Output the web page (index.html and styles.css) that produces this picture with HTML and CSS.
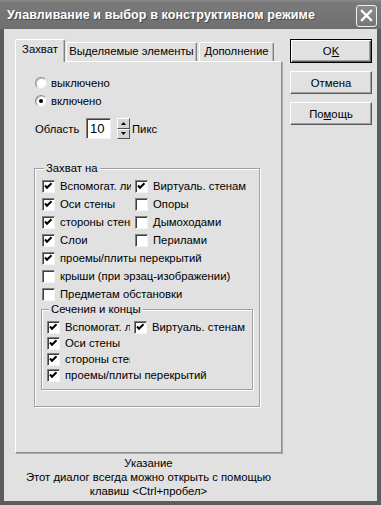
FILE: index.html
```html
<!DOCTYPE html>
<html lang="ru">
<head>
<meta charset="utf-8">
<link rel="stylesheet" href="styles.css">
</head>
<body>
<div class="window">
  <div class="titlebar">
    <span class="title">Улавливание и выбор в конструктивном режиме</span>
    <span class="close"><svg width="13" height="13" viewBox="0 0 13 13"><path d="M2 2 L11 11 M11 2 L2 11" stroke="#fff" stroke-width="2.4" stroke-linecap="square"/></svg></span>
  </div>
  <div class="frame">
    <div class="main">
      <div class="tabs">
        <div class="tab active">Захват</div>
        <div class="tab">Выделяемые элементы</div>
        <div class="tab">Дополнение</div>
      </div>
      <div class="panel">
        <div class="radio-row"><span class="radio"></span><span>выключено</span></div>
        <div class="radio-row"><span class="radio checked"></span><span>включено</span></div>
        <div class="area-row">
          <span class="area-label">Область</span>
          <span class="edit">10</span>
          <span class="spin"><span class="spin-btn"><svg width="5" height="3" viewBox="0 0 5 3"><path d="M2.5 0 L5 3 L0 3 Z" fill="#000"/></svg></span><span class="spin-btn"><svg width="5" height="3" viewBox="0 0 5 3"><path d="M0 0 L5 0 L2.5 3 Z" fill="#000"/></svg></span></span>
          <span class="unit">Пикс</span>
        </div>
        <fieldset class="group outer">
          <legend>Захват на</legend>
          <div class="grid">
            <label class="cb-cell first"><span class="cb checked"></span><span class="txt">Вспомогат. линиям</span></label>
            <label class="cb-cell"><span class="cb checked"></span><span class="txt">Виртуаль. стенам</span></label>
            <label class="cb-cell first"><span class="cb checked"></span><span class="txt">Оси стены</span></label>
            <label class="cb-cell"><span class="cb"></span><span class="txt">Опоры</span></label>
            <label class="cb-cell first"><span class="cb checked"></span><span class="txt">стороны стены</span></label>
            <label class="cb-cell"><span class="cb"></span><span class="txt">Дымоходами</span></label>
            <label class="cb-cell first"><span class="cb checked"></span><span class="txt">Слои</span></label>
            <label class="cb-cell"><span class="cb"></span><span class="txt">Перилами</span></label>
            <label class="cb-cell wide"><span class="cb checked"></span><span class="txt">проемы/плиты перекрытий</span></label>
            <label class="cb-cell wide"><span class="cb"></span><span class="txt">крыши (при эрзац-изображении)</span></label>
            <label class="cb-cell wide"><span class="cb"></span><span class="txt">Предметам обстановки</span></label>
          </div>
          <fieldset class="group inner">
            <legend>Сечения и концы</legend>
            <div class="grid inner-grid">
              <label class="cb-cell first"><span class="cb checked"></span><span class="txt">Вспомогат. линиям</span></label>
              <label class="cb-cell"><span class="cb checked"></span><span class="txt">Виртуаль. стенам</span></label>
              <label class="cb-cell wide"><span class="cb checked"></span><span class="txt">Оси стены</span></label>
              <label class="cb-cell first"><span class="cb checked"></span><span class="txt">стороны стены</span></label>
              <span></span>
              <label class="cb-cell wide"><span class="cb checked"></span><span class="txt">проемы/плиты перекрытий</span></label>
            </div>
          </fieldset>
        </fieldset>
      </div>
      <div class="hint">
        <div>Указание</div>
        <div>Этот диалог всегда можно открыть с помощью</div>
        <div>клавиш &lt;Ctrl+пробел&gt;</div>
      </div>
    </div>
    <div class="buttons">
      <div class="btn default">O<u>K</u></div>
      <div class="btn">Отмена</div>
      <div class="btn">По<u>м</u>ощь</div>
    </div>
  </div>
</div>
</body>
</html>
```

FILE: styles.css
```css
* { box-sizing: border-box; }
html, body { margin: 0; padding: 0; background: #5c5c5c; }
body {
  font-family: "Liberation Sans", Arial, sans-serif;
  font-size: 11.3px;
  color: #000;
}
.window {
  width: 381px;
  height: 505px;
  display: flex;
  flex-direction: column;
  background: #e1e1e1;
}
.titlebar {
  height: 29px;
  flex: none;
  display: flex;
  align-items: center;
  justify-content: space-between;
  padding: 0 4px 0 7px;
  background: linear-gradient(#8a8a8a 0, #797979 3px, #747474 60%, #6e6e6e 100%);
}
.title {
  color: #fff;
  font-weight: bold;
  font-size: 12.5px;
  letter-spacing: 0.1px;
  text-shadow: 1px 1px 0 #4a4a4a;
}
.close {
  width: 21px;
  height: 22px;
  margin-top: 2px;
  border: 1px solid #f0f0f0;
  border-radius: 3px;
  background: linear-gradient(#8a8a8a, #777);
  display: flex;
  align-items: center;
  justify-content: center;
}
.frame {
  flex: 1;
  display: flex;
  gap: 8px;
  border-left: 4px solid #5c5c5c;
  border-right: 4px solid #5c5c5c;
  border-bottom: 4px solid #5c5c5c;
  padding: 10px 5px 0 11px;
  background: #e1e1e1;
}
.main {
  flex: none;
  width: 267px;
  min-width: 0;
  display: flex;
  flex-direction: column;
}
.tabs {
  height: 22px;
  display: flex;
  align-items: flex-end;
  position: relative;
  z-index: 1;
}
.tab {
  height: 19px;
  padding: 2px 0 0 0;
  text-align: center;
  border: 1px solid #fff;
  border-right-color: #808080;
  border-bottom: none;
  border-radius: 2px 2px 0 0;
  background: #e1e1e1;
  white-space: nowrap;
  box-shadow: inset -1px 0 0 #b8b8b8;
  margin-left: 1px;
}
.tab:nth-child(2) { width: 131px; }
.tab:nth-child(3) { width: 75px; margin-left: 2px; }
.tab.active {
  height: 23px;
  margin-bottom: -1px;
  margin-left: 0;
  padding: 3px 0 0 0;
  width: 50px;
}
.panel {
  height: 392px;
  border: 1px solid #fff;
  border-right-color: #909090;
  border-bottom-color: #909090;
  box-shadow: 1px 1px 0 #a8a8a8;
  padding: 12px 0 0 18px;
  display: flex;
  flex-direction: column;
}
.radio-row {
  height: 18px;
  display: flex;
  align-items: center;
  gap: 4px;
  padding-left: 1px;
}
.radio {
  width: 12px;
  height: 12px;
  border-radius: 50%;
  background: #fff;
  border: 1px solid;
  border-color: #8a8a8a #e8e8e8 #e8e8e8 #8a8a8a;
  box-shadow: inset 1px 1px 0 #c8c8c8;
  display: flex;
  align-items: center;
  justify-content: center;
}
.radio.checked::after {
  content: "";
  width: 4px;
  height: 4px;
  border-radius: 50%;
  background: #000;
}
.area-row {
  margin-top: 8px;
  height: 21px;
  display: flex;
  align-items: center;
  padding-left: 1px;
}
.area-label { width: 51px; }
.edit {
  width: 25px;
  height: 21px;
  background: #fff;
  border: 1px solid;
  border-color: #808080 #f4f4f4 #f4f4f4 #808080;
  box-shadow: inset 1px 1px 0 #404040;
  padding: 2px 0 0 3px;
  font-size: 13px;
  line-height: 16px;
}
.spin {
  margin-left: 6px;
  width: 13px;
  height: 21px;
  display: flex;
  flex-direction: column;
}
.spin-btn {
  flex: 1;
  border: 1px solid;
  border-color: #fff #505050 #505050 #fff;
  background: #d4d4d4;
  display: flex;
  align-items: center;
  justify-content: center;
}
.unit { margin-left: 2px; }
.group {
  margin: 0;
  border: 1px solid #a0a0a0;
  box-shadow: inset 1px 1px 0 #fff, 1px 1px 0 #fff;
  min-width: 0;
}
.group legend {
  padding: 0 2px;
  line-height: 14px;
  background: #e1e1e1;
}
.outer {
  margin-top: 22px;
  width: 226px;
  padding: 2px 4px 16px 7px;
}
.outer > legend { margin-left: 2px; }
.grid {
  display: grid;
  grid-template-columns: 89px 1fr;
  column-gap: 4px;
  grid-auto-rows: 18px;
}
.cb-cell {
  display: flex;
  align-items: center;
  gap: 5px;
  white-space: nowrap;
  overflow: hidden;
  min-width: 0;
}
.cb-cell.wide { grid-column: 1 / 3; }
.cb {
  flex: none;
  width: 13px;
  height: 13px;
  background: #fff;
  border: 1px solid;
  border-color: #808080 #f4f4f4 #f4f4f4 #808080;
  box-shadow: inset 1px 1px 0 #404040;
}
.cb.checked {
  background: #fff url("data:image/svg+xml,%3Csvg xmlns='http://www.w3.org/2000/svg' width='11' height='11' viewBox='0 0 11 11'%3E%3Cpath d='M2 4.5 L4 6.7 L8.5 2.2' fill='none' stroke='%23000' stroke-width='2'/%3E%3C/svg%3E") no-repeat 0 0;
}
.inner {
  margin-top: -1px;
  margin-left: -1px;
  width: 212px;
  padding: 3px 4px 6px 5px;
}
.inner > legend { margin-left: 2px; }
.inner-grid {
  grid-template-columns: 83px 1fr;
  grid-auto-rows: 16px;
}
.hint {
  margin-top: 3px;
  text-align: center;
  line-height: 14px;
}
.buttons {
  width: 83px;
  display: flex;
  flex-direction: column;
  gap: 8px;
}
.btn {
  height: 23px;
  display: flex;
  align-items: center;
  justify-content: center;
  border: 1px solid;
  border-color: #fff #5a5a5a #5a5a5a #fff;
  box-shadow: inset -1px -1px 0 #a0a0a0;
  background: #e1e1e1;
}
.btn.default {
  height: 24px;
  border: 1px solid #000;
  box-shadow: inset 1px 1px 0 #fff, inset -1px -1px 0 #5a5a5a, inset -2px -2px 0 #a0a0a0;
}
```
